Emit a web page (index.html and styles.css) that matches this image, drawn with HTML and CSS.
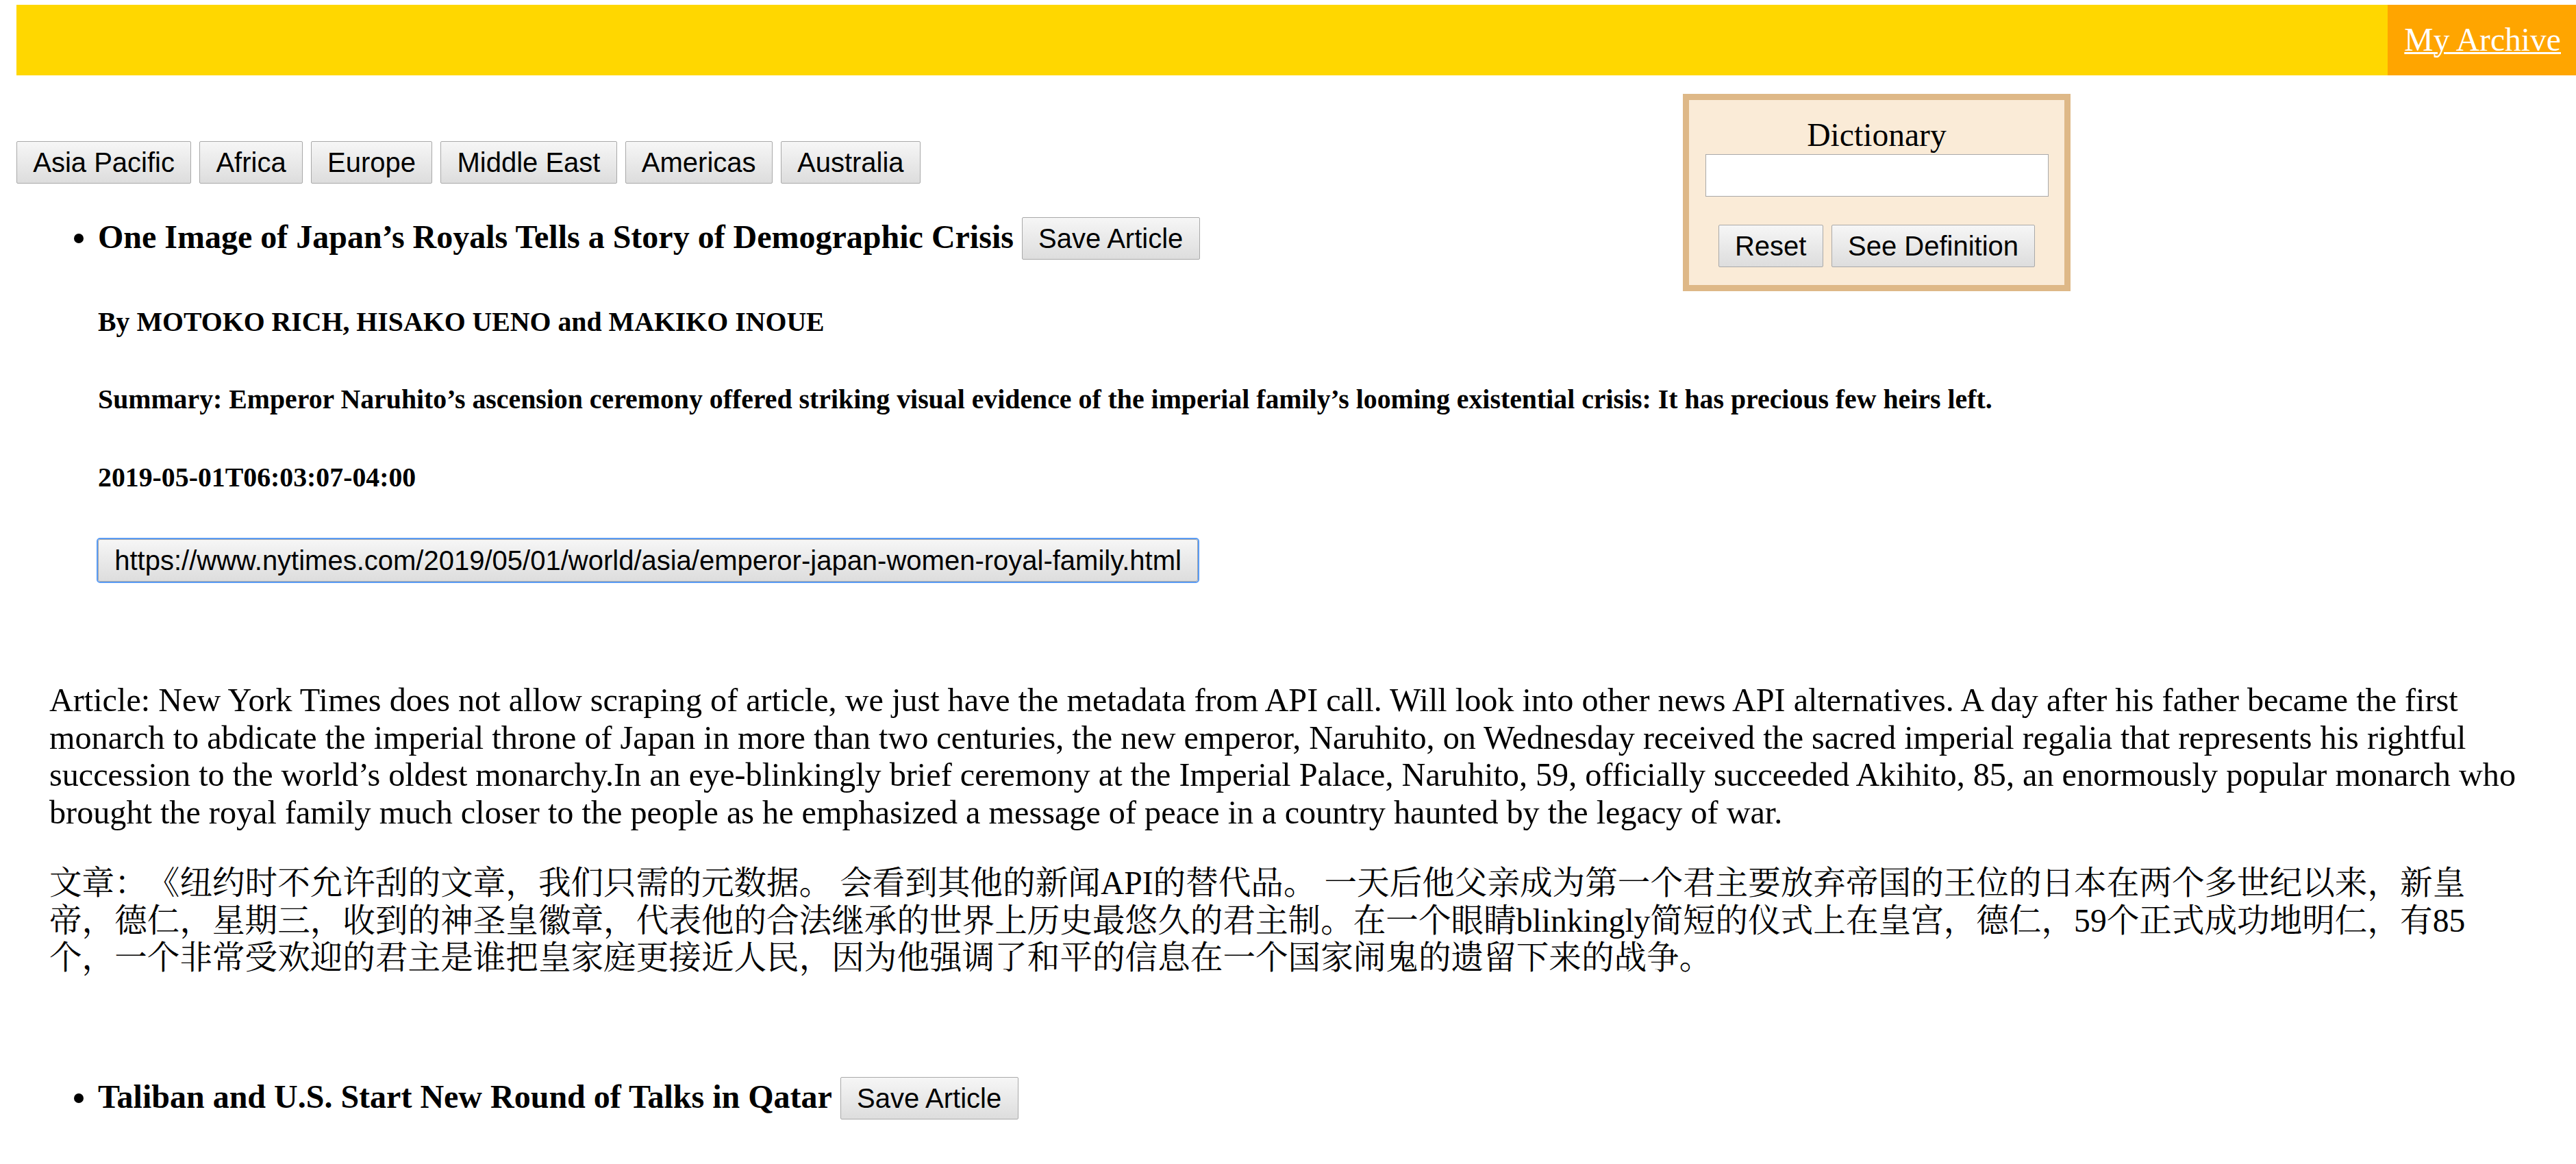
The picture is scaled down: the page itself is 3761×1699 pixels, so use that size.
FILE: index.html
```html
<!DOCTYPE html>
<html lang="en">
<head>
<meta charset="utf-8">
<title>News Reader</title>
<link rel="stylesheet" href="styles.css">
</head>
<body>
<header class="topbar">
  <a class="archive" href="#">My Archive</a>
</header>
<aside class="dict">
  <div class="dict-title">Dictionary</div>
  <input class="dict-input" type="text">
  <div class="dict-actions">
    <button class="btn">Reset</button>
    <button class="btn">See Definition</button>
  </div>
</aside>
<nav class="regions">
  <button class="btn">Asia Pacific</button>
  <button class="btn">Africa</button>
  <button class="btn">Europe</button>
  <button class="btn">Middle East</button>
  <button class="btn">Americas</button>
  <button class="btn">Australia</button>
</nav>
<section class="story">
  <ul class="story-head">
    <li>
      <strong class="headline">One Image of Japan’s Royals Tells a Story of Demographic Crisis</strong>
      <button class="btn">Save Article</button>
      <h5 class="meta">By MOTOKO RICH, HISAKO UENO and MAKIKO INOUE</h5>
      <h5 class="meta">Summary: Emperor Naruhito’s ascension ceremony offered striking visual evidence of the imperial family’s looming existential crisis: It has precious few heirs left.</h5>
      <h5 class="meta">2019-05-01T06:03:07-04:00</h5>
      <div class="url-row"><button class="btn url-btn">https://www.nytimes.com/2019/05/01/world/asia/emperor-japan-women-royal-family.html</button></div>
    </li>
  </ul>
  <div class="story-body">
    <p class="en">Article: New York Times does not allow scraping of article, we just have the metadata from API call. Will look into other news API alternatives. A day after his father became the first monarch to abdicate the imperial throne of Japan in more than two centuries, the new emperor, Naruhito, on Wednesday received the sacred imperial regalia that represents his rightful succession to the world’s oldest monarchy.In an eye-blinkingly brief ceremony at the Imperial Palace, Naruhito, 59, officially succeeded Akihito, 85, an enormously popular monarch who brought the royal family much closer to the people as he emphasized a message of peace in a country haunted by the legacy of war.</p>
    <p class="zh" lang="zh-CN">文章：《纽约时不允许刮的文章，我们只需的元数据。 会看到其他的新闻API的替代品。 一天后他父亲成为第一个君主要放弃帝国的王位的日本在两个多世纪以来，新皇帝，德仁，星期三，收到的神圣皇徽章，代表他的合法继承的世界上历史最悠久的君主制。在一个眼睛blinkingly简短的仪式上在皇宫，德仁，59个正式成功地明仁，有85个，一个非常受欢迎的君主是谁把皇家庭更接近人民，因为他强调了和平的信息在一个国家闹鬼的遗留下来的战争。</p>
  </div>
</section>
<section class="story">
  <ul class="story-head">
    <li>
      <strong class="headline">Taliban and U.S. Start New Round of Talks in Qatar</strong>
      <button class="btn">Save Article</button>
    </li>
  </ul>
</section>
</body>
</html>
```

FILE: styles.css
```css
html, body {
  margin: 0;
}

body {
  padding: 7px 24px 0;
  font-family: "Liberation Serif", "Times New Roman", serif;
  font-size: 47.6px;
  line-height: 54.7px;
  color: #000;
  background: #fff;
}

/* top bar */
.topbar {
  display: flex;
  justify-content: flex-end;
  height: 103px;
  margin-right: -24px;
  background: #ffd700;
}

.archive {
  display: flex;
  align-items: center;
  padding: 0 22px 0 24px;
  background: #ffa500;
  color: #fff;
  text-decoration: underline;
  text-decoration-thickness: 3px;
}

/* dictionary widget */
.dict {
  float: right;
  width: 548px;
  margin: 27px 714px 0 0;
  padding: 24px 0 26px;
  border: 9px solid #deb887;
  background: #faebd7;
  display: flex;
  flex-direction: column;
  align-items: center;
}

.dict-title {
  line-height: 54.7px;
}

.dict-input {
  box-sizing: border-box;
  width: 501px;
  height: 62px;
  margin: 0;
  padding: 0 6px;
  border: 1px solid #a9a9a9;
  background: #fff;
  font-size: 39.67px;
}

.dict-actions {
  display: flex;
  gap: 12px;
  margin-top: 41px;
}

/* buttons */
.btn {
  margin: 0;
  padding: 7px 23.25px;
  border: 1px solid #a9a9a9;
  border-radius: 2px;
  background: linear-gradient(#f6f6f6, #dddddd);
  color: #000;
  font-family: "Liberation Sans", Arial, sans-serif;
  font-size: 40px;
  line-height: 46px;
  vertical-align: baseline;
}

.regions {
  margin-top: 96px;
}

/* stories */
.story-head {
  margin: 0;
  padding: 49px 0 0 119px;
  list-style: disc;
}

.headline {
  font-size: 48px;
  font-weight: bold;
}

.meta {
  margin: 67.5px 0 0;
  font-size: 39.8px;
  line-height: 46px;
  font-weight: bold;
}

.url-row {
  margin-top: 67.5px;
}

.url-btn {
  border-radius: 3px;
  outline: 2px solid #5b9cf4;
  outline-offset: 0;
}

.story-body {
  margin: 0 48px;
  padding: 146px 0 97px;
}

.story-body p {
  margin: 0;
}

.story-body p + p {
  margin-top: 48px;
}

.en {
  font-size: 48.2px;
}

.zh {
  font-family: "Liberation Serif", "Noto Serif CJK SC", "Noto Sans CJK SC", serif;
  text-spacing-trim: space-all;
}
```
